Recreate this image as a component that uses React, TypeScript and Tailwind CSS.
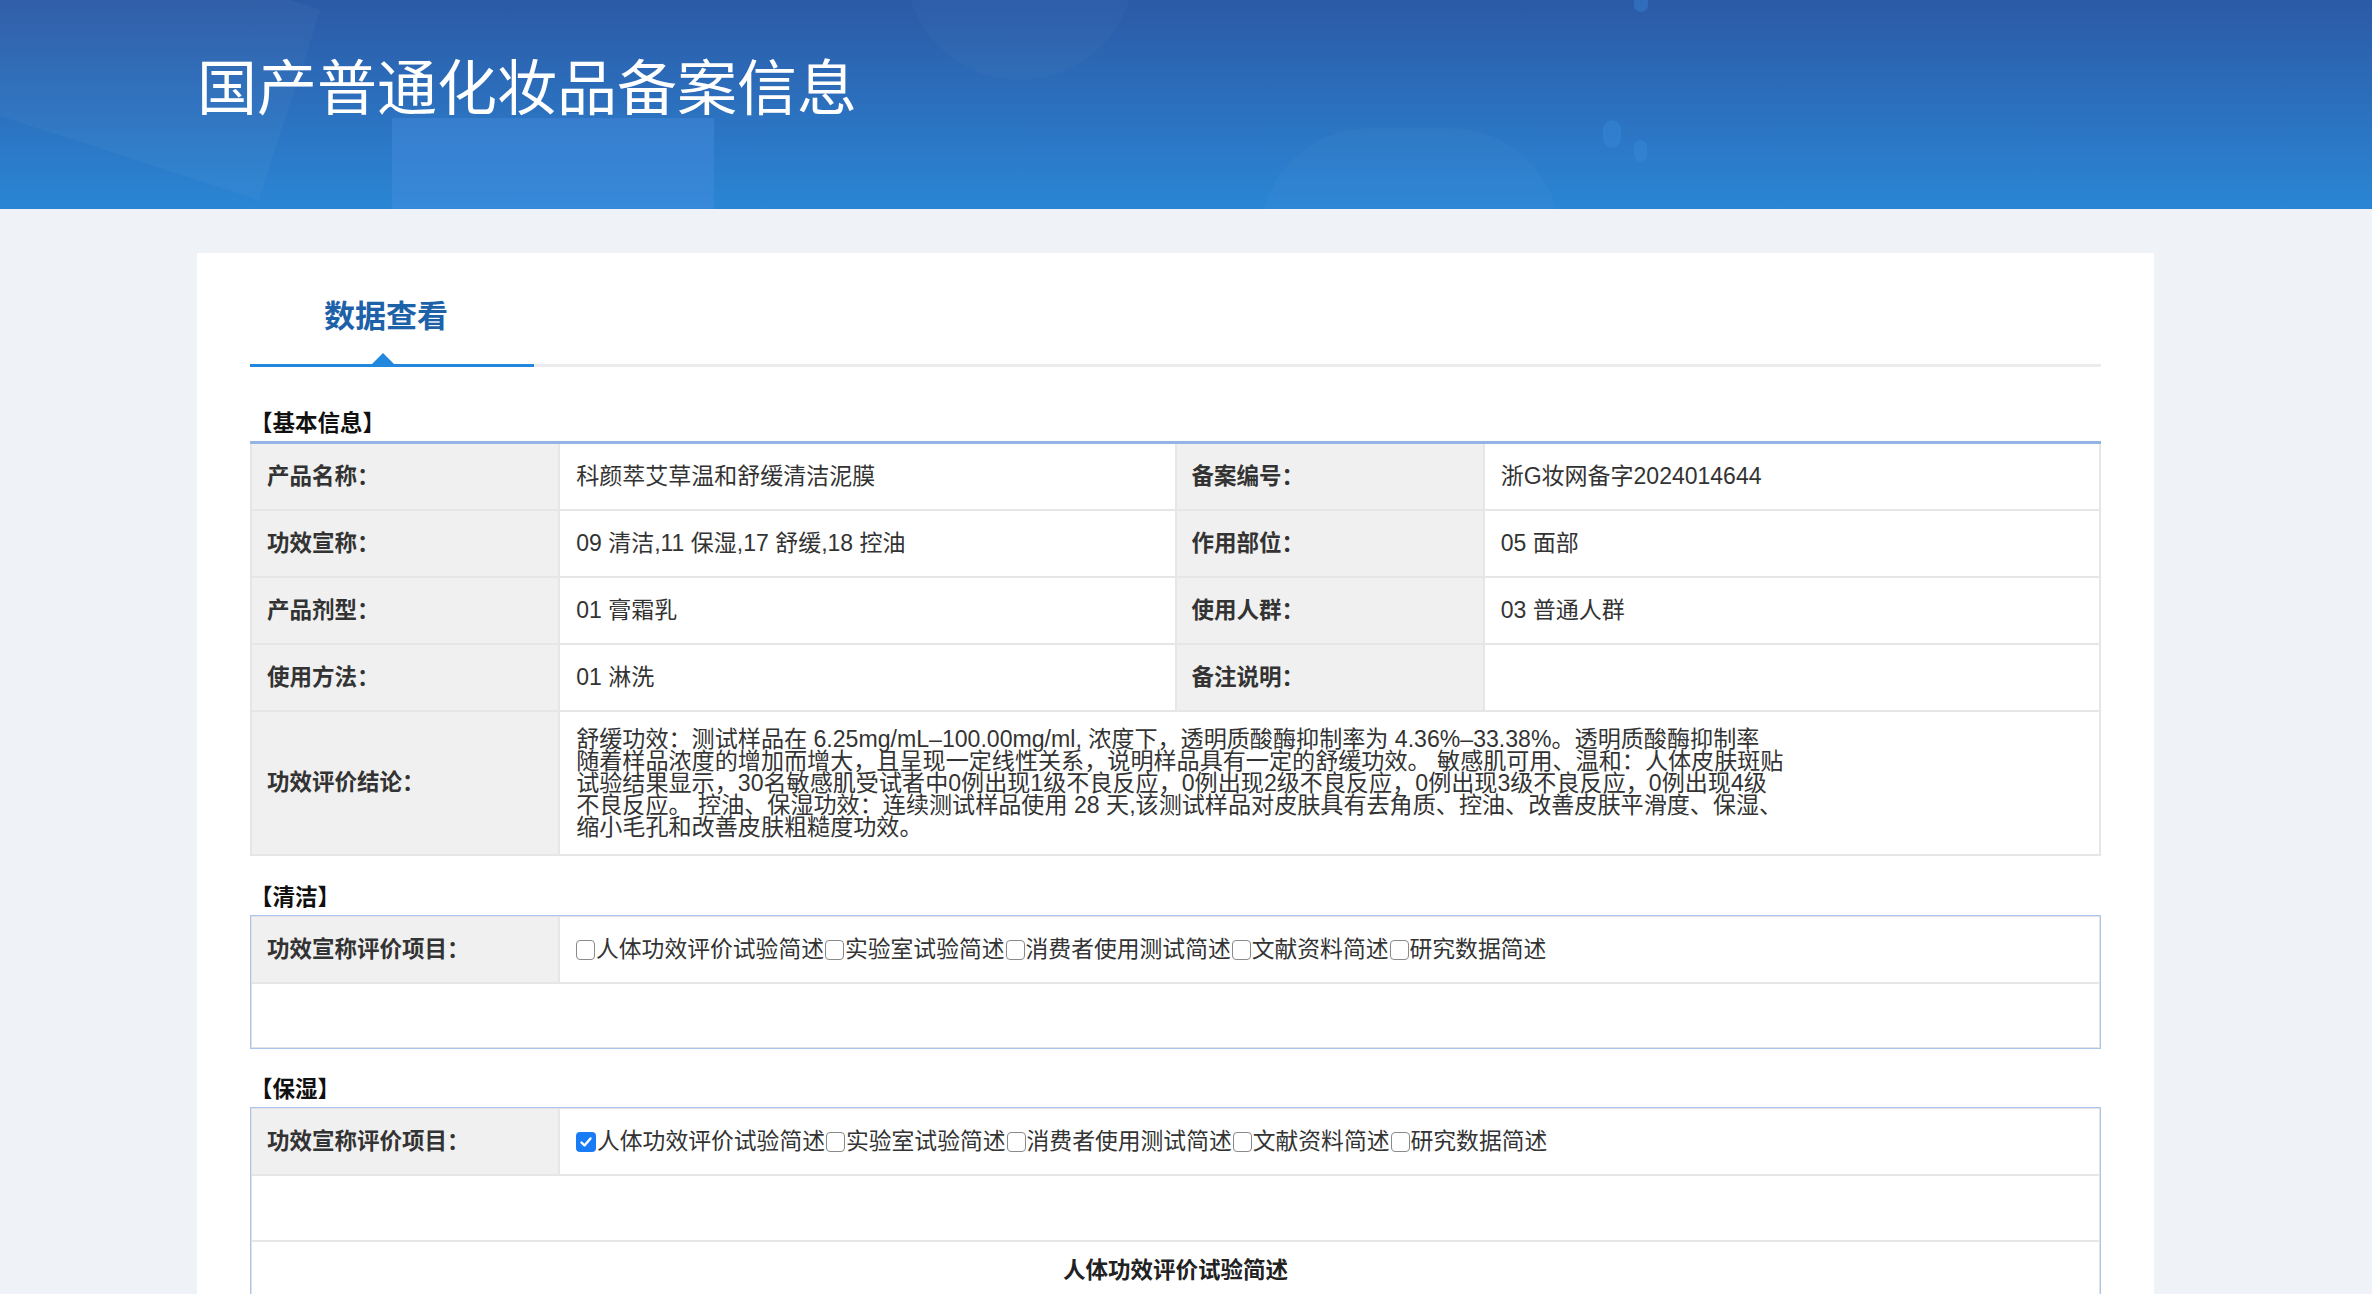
import React from 'react';

const FONT = "font-['Liberation_Sans','Noto_Sans_CJK_SC',sans-serif]";

const Label: React.FC<{ children?: React.ReactNode; className?: string }> = ({ children, className = '' }) => (
    <div
        className={`flex items-center bg-[#f0f0f0] pl-[15px] text-[22.5px] font-bold text-[#333] border-r-2 border-b-2 border-[#e6e6e6] ${className}`}
    >
        {children}
    </div>
);

const Value: React.FC<{ children?: React.ReactNode; className?: string }> = ({ children, className = '' }) => (
    <div
        className={`flex items-center pl-[16px] text-[23px] text-[#333] border-r-2 border-b-2 border-[#e6e6e6] ${className}`}
    >
        {children}
    </div>
);

const Check: React.FC<{ checked?: boolean }> = ({ checked }) =>
    checked ? (
        <span className="flex h-[20px] w-[20px] shrink-0 items-center justify-center rounded-[4px] bg-[#1a7cf5]">
            <svg width="14" height="14" viewBox="0 0 14 14" fill="none">
                <path d="M2.5 7.5l3 3 6-7" stroke="#fff" strokeWidth="2.4" strokeLinecap="round" strokeLinejoin="round" />
            </svg>
        </span>
    ) : (
        <span className="h-[20px] w-[19px] shrink-0 rounded-[4px] border-[1.5px] border-[#8a8a8a] bg-white" />
    );

const ITEMS = ['人体功效评价试验简述', '实验室试验简述', '消费者使用测试简述', '文献资料简述', '研究数据简述'];

const Checks: React.FC<{ checked?: number }> = ({ checked }) => (
    <div className="flex items-center text-[22.8px] text-[#333]">
        {ITEMS.map((t, i) => (
            <span key={t} className="flex items-center gap-[1px]">
                <Check checked={checked === i} />
                <span className="mr-[1px]">{t}</span>
            </span>
        ))}
    </div>
);

const SectionTitle: React.FC<{ children: React.ReactNode; className?: string }> = ({ children, className = '' }) => (
    <div className={`text-[22.5px] leading-[21px] font-bold text-[#111] ${className}`}>{children}</div>
);

const CONCLUSION = [
    '舒缓功效：测试样品在 6.25mg/mL–100.00mg/ml, 浓度下，透明质酸酶抑制率为 4.36%–33.38%。透明质酸酶抑制率',
    '随着样品浓度的增加而增大，且呈现一定线性关系，说明样品具有一定的舒缓功效。 敏感肌可用、温和：人体皮肤斑贴',
    '试验结果显示，30名敏感肌受试者中0例出现1级不良反应，0例出现2级不良反应，0例出现3级不良反应，0例出现4级',
    '不良反应。 控油、保湿功效：连续测试样品使用 28 天,该测试样品对皮肤具有去角质、控油、改善皮肤平滑度、保湿、',
    '缩小毛孔和改善皮肤粗糙度功效。',
];

const App: React.FC = () => {
    return (
        <div className={`min-h-screen bg-[#eff3f7] ${FONT}`}>
            {/* 顶部横幅 */}
            <header className="relative h-[209px] overflow-hidden bg-gradient-to-b from-[#2b5aa6] to-[#2a86d5]">
                <div className="absolute left-[392px] top-[118px] h-[120px] w-[322px] bg-[#4a8ee0]/40" />
                <div className="absolute left-[-120px] top-[-60px] h-[200px] w-[420px] rotate-[18deg] bg-white/[0.03]" />
                <div className="absolute left-[905px] top-[-150px] h-[230px] w-[230px] rounded-full bg-white/[0.025]" />
                <div className="absolute left-[1260px] top-[128px] h-[220px] w-[300px] rounded-full bg-white/[0.025]" />
                <div className="absolute left-[1603px] top-[120px] h-[28px] w-[18px] rounded-full bg-[#3a8fe0]/35" />
                <div className="absolute left-[1634px] top-[140px] h-[22px] w-[13px] rounded-full bg-[#3a8fe0]/35" />
                <div className="absolute left-[1634px] top-[-6px] h-[18px] w-[14px] rounded-full bg-[#3a8fe0]/35" />
                <h1 className="relative pl-[197px] pt-[52px] text-[60px] leading-[64px] font-normal text-white font-['Noto_Sans_CJK_SC',sans-serif]">
                    国产普通化妆品备案信息
                </h1>
            </header>

            <main className="pl-[197px] pr-[218px] pt-[44px]">
                <div className="bg-white px-[53px] pb-[60px]">
                    {/* 标签页 */}
                    <div className="flex">
                        <div className="relative w-[284px] pt-[46px] pb-[35px] pr-[12px] text-center text-[31px] leading-[30px] font-bold text-[#1d62a9] font-['Noto_Sans_CJK_SC',sans-serif]">
                            数据查看
                            <span className="absolute bottom-0 left-[122px] h-0 w-0 border-x-[11px] border-b-[11px] border-x-transparent border-b-[#2288dd]" />
                        </div>
                    </div>
                    <div className="flex h-[3px]">
                        <div className="w-[284px] bg-[#2288dd]" />
                        <div className="flex-1 bg-[#ececec]" />
                    </div>

                    {/* 基本信息 */}
                    <SectionTitle className="mt-[46px]">【基本信息】</SectionTitle>
                    <div className="mt-[7px] h-[3px] bg-[#94b4e6]" />
                    <div className="grid grid-cols-[1fr_2fr_1fr_2fr] border-l-2 border-[#e6e6e6]">
                        <Label className="h-[67px]">产品名称：</Label>
                        <Value className="h-[67px]">科颜萃艾草温和舒缓清洁泥膜</Value>
                        <Label className="h-[67px]">备案编号：</Label>
                        <Value className="h-[67px]">浙G妆网备字2024014644</Value>

                        <Label className="h-[67px]">功效宣称：</Label>
                        <Value className="h-[67px]">09 清洁,11 保湿,17 舒缓,18 控油</Value>
                        <Label className="h-[67px]">作用部位：</Label>
                        <Value className="h-[67px]">05 面部</Value>

                        <Label className="h-[67px]">产品剂型：</Label>
                        <Value className="h-[67px]">01 膏霜乳</Value>
                        <Label className="h-[67px]">使用人群：</Label>
                        <Value className="h-[67px]">03 普通人群</Value>

                        <Label className="h-[67px]">使用方法：</Label>
                        <Value className="h-[67px]">01 淋洗</Value>
                        <Label className="h-[67px]">备注说明：</Label>
                        <Value className="h-[67px]" />

                        <Label className="h-[144px]">功效评价结论：</Label>
                        <Value className="col-span-3 h-[144px]">
                            <div className="text-[23.1px] leading-[22px]">
                                {CONCLUSION.map((l) => (
                                    <div key={l} className="whitespace-nowrap">
                                        {l}
                                    </div>
                                ))}
                            </div>
                        </Value>
                    </div>

                    {/* 清洁 */}
                    <SectionTitle className="mt-[31px]">【清洁】</SectionTitle>
                    <div className="mt-[7px] border border-[#a9c5ed]">
                        <div className="border border-[#e3e3e3]">
                            <div className="grid grid-cols-[308px_1fr]">
                                <Label className="h-[67px]">功效宣称评价项目：</Label>
                                <div className="flex h-[67px] items-center border-b-2 border-[#e6e6e6] pl-[16px]">
                                    <Checks />
                                </div>
                            </div>
                            <div className="h-[63px]" />
                        </div>
                    </div>

                    {/* 保湿 */}
                    <SectionTitle className="mt-[30px]">【保湿】</SectionTitle>
                    <div className="mt-[7px] border border-[#a9c5ed]">
                        <div className="border border-[#e3e3e3]">
                            <div className="grid grid-cols-[308px_1fr]">
                                <Label className="h-[67px]">功效宣称评价项目：</Label>
                                <div className="flex h-[67px] items-center border-b-2 border-[#e6e6e6] pl-[16px]">
                                    <Checks checked={0} />
                                </div>
                            </div>
                            <div className="h-[66px] border-b-2 border-[#e6e6e6]" />
                            <div className="py-[17px] text-center text-[22.5px] leading-[24px] font-bold text-[#222]">
                                人体功效评价试验简述
                            </div>
                        </div>
                    </div>
                </div>
            </main>
        </div>
    );
};

export default App;
